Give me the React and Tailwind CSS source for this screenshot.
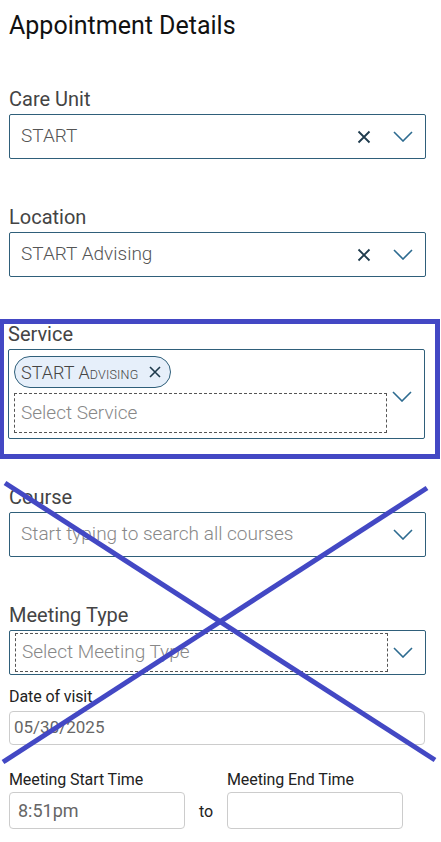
import React from 'react'

const font = { fontFamily: 'Roboto, "Noto Sans", sans-serif' }

const ClearIcon = () => (
  <svg width="14" height="14" viewBox="0 0 14 14" className="shrink-0">
    <path d="M1.5 1.5 L12.5 12.5 M12.5 1.5 L1.5 12.5" stroke="#1f3b4d" strokeWidth="1.8" fill="none" />
  </svg>
)

const Chevron = () => (
  <svg width="20" height="11" viewBox="0 0 20 11" className="shrink-0">
    <path d="M1 1 L10 10 L19 1" stroke="#2d6b90" strokeWidth="1.6" fill="none" />
  </svg>
)

const Label = ({ children, className = '' }) => (
  <div className={`h-[24px] text-[20px] leading-[24px] text-[#444] ${className}`}>{children}</div>
)

const SmallLabel = ({ children }) => (
  <div className="h-[20px] text-[16px] leading-[20px] text-[#222] tracking-[-0.1px]">{children}</div>
)

const SelectBox = ({ value, placeholder, clearable }) => (
  <div className="mt-[3px] h-[45px] w-[417px] rounded-[2px] border border-[#2f5f7a] flex items-center pl-[11px] pr-[12px]">
    <span className={`flex-1 text-[19px] font-light ${value ? 'text-[#555]' : 'text-[#888]'}`}>{value || placeholder}</span>
    {clearable && <div className="mr-[22px] flex items-center"><ClearIcon /></div>}
    <Chevron />
  </div>
)

const DashedSelect = ({ placeholder }) => (
  <div className="mt-[3px] h-[45px] w-[417px] rounded-[2px] border border-[#2f5f7a] flex items-center pl-[5px] pr-[12px]">
    <div className="h-[39px] w-[373px] border border-dashed border-[#555] flex items-center pl-[6px] text-[19px] font-light text-[#888]">
      {placeholder}
    </div>
    <div className="flex-1" />
    <Chevron />
  </div>
)

export default function App() {
  return (
    <div className="relative w-[441px] h-[842px] bg-white overflow-hidden" style={font}>
      <div className="pt-[11px] pl-[9px]">
        <h1 className="h-[30px] text-[25px] leading-[30px] text-[#111]">Appointment Details</h1>

        <div className="mt-[46px]">
          <Label>Care Unit</Label>
          <SelectBox value="START" clearable />
        </div>

        <div className="mt-[46px]">
          <Label>Location</Label>
          <SelectBox value="START Advising" clearable />
        </div>
      </div>

      <div className="mt-[42px] w-[440px] border-[5px] border-l-[4px] border-[#4348c4] pl-[4px] pb-[15px]">
        <Label className="-mt-[2px]">Service</Label>
        <div className="mt-[3px] h-[90px] w-[417px] rounded-[2px] border border-[#2f5f7a] flex pl-[5px] pr-[12px] pt-[6px]">
          <div className="flex flex-col gap-[5px]">
            <div className="h-[32px] w-[157px] rounded-full border border-[#2f5f7a] bg-[#e6effa] flex items-center justify-between pl-[6px] pr-[9px] font-light text-[#444]">
              <span className="whitespace-nowrap text-[18px]">START A<span className="text-[12.5px] uppercase tracking-[0.2px]">dvising</span></span>
              <svg width="12" height="12" viewBox="0 0 12 12" className="shrink-0">
                <path d="M1 1 L11 11 M11 1 L1 11" stroke="#1f3b4d" strokeWidth="1.6" fill="none" />
              </svg>
            </div>
            <div className="h-[40px] w-[373px] border border-dashed border-[#555] flex items-center pl-[6px] text-[19px] font-light text-[#888]">
              Select Service
            </div>
          </div>
          <div className="flex-1" />
          <div className="pt-[35px]"><Chevron /></div>
        </div>
      </div>

      <div className="pl-[9px]">
        <div className="mt-[26px]">
          <Label>Course</Label>
          <SelectBox placeholder="Start typing to search all courses" />
        </div>

        <div className="mt-[46px]">
          <Label>Meeting Type</Label>
          <DashedSelect placeholder="Select Meeting Type" />
        </div>

        <div className="mt-[12px]">
          <SmallLabel>Date of visit</SmallLabel>
          <div className="mt-[4px] h-[34px] w-[416px] rounded-[4px] border border-[#ccc] flex items-center pl-[4px] text-[17px] text-[#666]">
            05/30/2025
          </div>
        </div>

        <div className="mt-[25px] flex">
          <div>
            <SmallLabel>Meeting Start Time</SmallLabel>
            <div className="mt-[2px] h-[37px] w-[176px] rounded-[4px] border border-[#ccc] flex items-center pl-[8px] text-[18px] text-[#666]">
              8:51pm
            </div>
          </div>
          <div className="w-[42px] flex items-end justify-center pb-[5px] text-[16px] text-[#222]">to</div>
          <div>
            <SmallLabel>Meeting End Time</SmallLabel>
            <div className="mt-[2px] h-[37px] w-[176px] rounded-[4px] border border-[#ccc]" />
          </div>
        </div>
      </div>

      <svg className="absolute inset-0 pointer-events-none" width="441" height="842" viewBox="0 0 441 842">
        <line x1="5" y1="483" x2="435" y2="760" stroke="#4348c4" strokeWidth="5" />
        <line x1="427" y1="488" x2="3" y2="762" stroke="#4348c4" strokeWidth="5" />
      </svg>
    </div>
  )
}
